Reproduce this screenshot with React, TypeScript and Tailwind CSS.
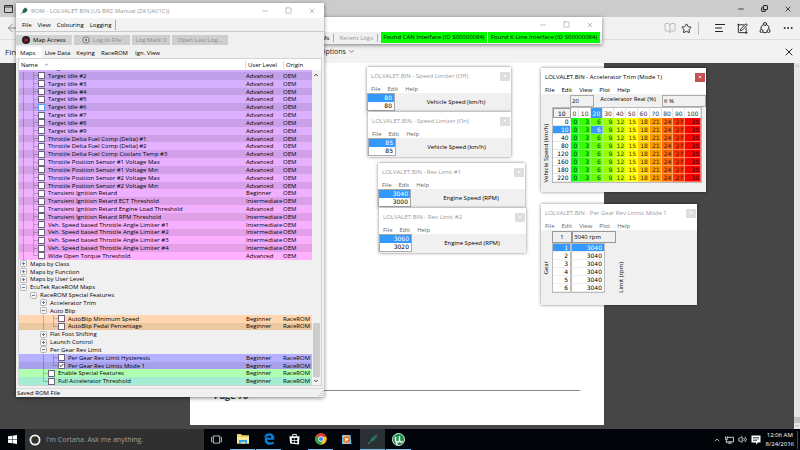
import type { ReactNode } from 'react'
import { AlignLeft, ArrowLeft, BookOpen, Check, ChevronDown, ChevronUp, Copy, Minus, MoreHorizontal, Square, Star, Volume2, X } from 'lucide-react'

type Guide = 'gap' | 'line' | 'branch' | 'end'

interface TreeRow {
  label: string
  guides: Guide[]
  node?: '+' | '-'
  level?: string
  origin?: string
  color?: string
  checked?: boolean
  focused?: boolean
}

const oemMaps: [string, string][] = [
  ['Target Idle #2', 'Advanced'],
  ['Target Idle #3', 'Advanced'],
  ['Target Idle #4', 'Advanced'],
  ['Target Idle #5', 'Advanced'],
  ['Target Idle #6', 'Advanced'],
  ['Target Idle #7', 'Advanced'],
  ['Target Idle #8', 'Advanced'],
  ['Target Idle #9', 'Advanced'],
  ['Throttle Delta Fuel Comp (Delta) #1', 'Advanced'],
  ['Throttle Delta Fuel Comp (Delta) #2', 'Advanced'],
  ['Throttle Delta Fuel Comp Coolant Temp #3', 'Advanced'],
  ['Throttle Position Sensor #1 Voltage Max', 'Advanced'],
  ['Throttle Position Sensor #1 Voltage Min', 'Advanced'],
  ['Throttle Position Sensor #2 Voltage Max', 'Advanced'],
  ['Throttle Position Sensor #2 Voltage Min', 'Advanced'],
  ['Transient Ignition Retard', 'Beginner'],
  ['Transient Ignition Retard ECT Threshold', 'Intermediate'],
  ['Transient Ignition Retard Engine Load Threshold', 'Advanced'],
  ['Transient Ignition Retard RPM Threshold', 'Intermediate'],
  ['Veh. Speed based Throttle Angle Limiter #1', 'Intermediate'],
  ['Veh. Speed based Throttle Angle Limiter #2', 'Intermediate'],
  ['Veh. Speed based Throttle Angle Limiter #3', 'Intermediate'],
  ['Veh. Speed based Throttle Angle Limiter #4', 'Intermediate'],
  ['Wide Open Torque Threshold', 'Advanced'],
]

// Lilac to pink down the list, every other row a shade darker
function oemColor(i: number) {
  const shade = i % 2 === 0 ? 0.91 : 1
  const red = 210 + (i / 23) * 45
  return `rgb(${Math.round(red * shade)}, ${Math.round(176 * shade)}, ${Math.round(255 * shade)})`
}

const treeRows: TreeRow[] = [
  ...oemMaps.map(([label, level], i): TreeRow => ({
    label,
    level,
    origin: 'OEM',
    guides: ['line', i === oemMaps.length - 1 ? 'end' : 'branch'],
    color: oemColor(i),
    focused: i === 4,
  })),
  { label: 'Maps by Class', guides: [], node: '+' },
  { label: 'Maps by Function', guides: [], node: '+' },
  { label: 'Maps by User Level', guides: [], node: '+' },
  { label: 'EcuTek RaceROM Maps', guides: [], node: '-' },
  { label: 'RaceROM Special Features', guides: ['gap'], node: '-' },
  { label: 'Accelerator Trim', guides: ['gap', 'gap'], node: '+' },
  { label: 'Auto Blip', guides: ['gap', 'gap'], node: '-' },
  { label: 'AutoBlip Minimum Speed', guides: ['gap', 'gap', 'line', 'branch'], level: 'Beginner', origin: 'RaceROM', color: '#ffd6b0' },
  { label: 'AutoBlip Pedal Percentage', guides: ['gap', 'gap', 'line', 'end'], level: 'Beginner', origin: 'RaceROM', color: '#ebc8a2' },
  { label: 'Flat Foot Shifting', guides: ['gap', 'gap'], node: '+' },
  { label: 'Launch Control', guides: ['gap', 'gap'], node: '+' },
  { label: 'Per Gear Rev Limit', guides: ['gap', 'gap'], node: '-' },
  { label: 'Per Gear Rev Limit Hysteresis', guides: ['gap', 'gap', 'line', 'branch'], level: 'Beginner', origin: 'RaceROM', color: '#b5b0ff' },
  { label: 'Per Gear Rev Limits Mode 1', guides: ['gap', 'gap', 'line', 'end'], level: 'Beginner', origin: 'RaceROM', color: '#a8a0ea', checked: true },
  { label: 'Enable Special Features', guides: ['gap', 'gap', 'branch'], level: 'Beginner', origin: 'RaceROM', color: '#b0ffb0' },
  { label: 'Full Accelerator Threshold', guides: ['gap', 'gap', 'end'], level: 'Beginner', origin: 'RaceROM', color: '#a4ecd2' },
]

function GuideCell({ kind }: { kind: Guide }) {
  if (kind === 'gap') return <span className="w-[10px] shrink-0" />
  if (kind === 'line') return <span className="w-[10px] shrink-0 self-stretch border-l border-black/20" />
  return (
    <span className="flex w-[5px] shrink-0 flex-col self-stretch">
      <span className="flex-1 border-b border-l border-black/20" />
      <span className={kind === 'branch' ? 'flex-1 border-l border-black/20' : 'flex-1'} />
    </span>
  )
}

function TreeItem({ row }: { row: TreeRow }) {
  return (
    <tr className="flex min-h-0 flex-1 items-center" style={{ backgroundColor: row.color }}>
      <td className="flex flex-1 items-center self-stretch pl-1">
        {row.guides.map((kind, i) => <GuideCell key={i} kind={kind} />)}
        {row.node ? (
          <button className="-ml-[3px] flex items-center gap-[3px]">
            <svg viewBox="0 0 7 7" className="h-[7px] w-[7px]" fill="none">
              <rect x="0.5" y="0.5" width="6" height="6" rx="1" fill="#f4f4f4" stroke="#b4b4b4" />
              <path d={row.node === '+' ? 'M2 3.5h3M3.5 2v3' : 'M2 3.5h3'} stroke="#6a78aa" />
            </svg>
            {row.label}
          </button>
        ) : (
          <label className="flex items-center gap-[3px]">
            <span className="relative flex">
              <input
                type="checkbox"
                defaultChecked={row.checked}
                className={`peer h-[7px] w-[7px] appearance-none border bg-white ${row.focused ? 'border-[#5a9cf0]' : 'border-[#6d6480]'}`}
              />
              <Check className="pointer-events-none absolute inset-px hidden h-[5px] w-[5px] text-black peer-checked:block" strokeWidth={4} />
            </span>
            {row.label}
          </label>
        )}
      </td>
      <td className="w-[37px]">{row.level}</td>
      <td className="w-[29px]">{row.origin}</td>
    </tr>
  )
}

function CarIcon({ className }: { className: string }) {
  return (
    <svg viewBox="0 0 16 16" className={className}>
      <path d="M1 15 5 9.500C5 5.500 9 2 12 1l1 2.500 2 .5c0 4-3.500 7.500-7.500 8L4 11.500 2 15.500z" fill="#17594a" />
      <path d="M5 11 12 4" stroke="#4fa08a" strokeWidth="1" />
    </svg>
  )
}

function MenuBar({ items, className }: { items: string[]; className: string }) {
  return (
    <nav className={`flex items-center ${className}`}>
      {items.map((item) => <button key={item}>{item}</button>)}
    </nav>
  )
}

function RomWindow() {
  return (
    <section className="absolute top-[3px] left-4 flex h-[394px] w-[308px] flex-col bg-[#f0f0f0] shadow-[0_1px_4px_rgba(0,0,0,0.5)]">
      <header className="flex h-[15px] items-center bg-white pl-1 text-[#999]">
        <CarIcon className="h-2 w-2" />
        <h1 className="ml-[3px] flex-1">ROM - LOLVALET.BIN (US BRZ Manual (ZA1JA01C))</h1>
        <div className="flex gap-4 pr-2">
          <button aria-label="Minimize"><Minus className="h-2 w-2" strokeWidth={2} /></button>
          <button aria-label="Maximize"><Square className="h-[7px] w-[7px]" strokeWidth={2} /></button>
          <button aria-label="Close"><X className="h-2 w-2" strokeWidth={2} /></button>
        </div>
      </header>
      <div className="flex h-[13px] items-center bg-[#f2f2f2] pl-[6px]">
        <MenuBar items={['File', 'View', 'Colouring', 'Logging']} className="h-[10px] gap-[6px] border-r border-[#aaa] pr-1" />
      </div>
      <div className="h-px bg-[#c8c8c8]" />
      <div className="mt-[3px] flex h-[10px] gap-[2px] text-[#8d8d8d]">
        <button className="flex w-[56px] items-center gap-[3px] bg-[#d2d2d2] pl-[6px] text-black">
          <svg viewBox="0 0 8 8" className="h-2 w-2 shrink-0"><circle cx="4" cy="4" r="4" fill="#222" /><circle cx="4" cy="4" r="1.500" fill="#d01818" /></svg>
          Map Access
        </button>
        <button className="flex w-[56px] items-center gap-[3px] bg-[#cecece] pl-2">
          <svg viewBox="0 0 8 8" className="h-2 w-2 shrink-0"><circle cx="4" cy="4" r="3" fill="#ddd" stroke="#999" strokeWidth="1.500" /><circle cx="4" cy="4" r="1.200" fill="#777" /></svg>
          Log to File
        </button>
        <button className="w-[38px] bg-[#cecece]">Log Mark 0</button>
        <button className="w-[56px] bg-[#cecece]">Open Last Log...</button>
      </div>
      <div role="tablist" className="mt-[2px] flex h-[11px] items-center">
        <button role="tab" aria-selected="true" className="h-[11px] w-[26px] bg-white pl-1 text-left">Maps</button>
        <button role="tab" className="w-[31px]">Live Data</button>
        <button role="tab" className="w-[25px]">Keying</button>
        <button role="tab" className="w-[33px]">RaceROM</button>
        <button role="tab" className="w-[33px]">Ign. View</button>
      </div>
      <div className="mx-[2px] mb-[2px] flex min-h-0 flex-1 flex-col border border-[#d4d4d4]">
        <table className="flex min-h-0 flex-1 flex-col text-left">
          <thead className="bg-white">
            <tr className="flex h-[11px] items-center">
              <th className="flex flex-1 items-center gap-[6px] pl-[2px] font-normal">Name <ChevronUp className="h-[5px] w-[5px]" /></th>
              <th className="w-[38px] border-l border-[#ddd] pl-[2px] font-normal">User Level</th>
              <th className="w-[38px] border-l border-[#ddd] pl-[2px] font-normal">Origin</th>
            </tr>
          </thead>
          <tbody className="mr-[9px] flex min-h-0 flex-1 flex-col">
            <tr className="flex h-[2px] items-end overflow-hidden bg-[#d2b0ff]">
              <td className="flex-1 pl-[29px]">Target Idle #1</td>
              <td className="w-[37px]">Advanced</td>
              <td className="w-[29px]">OEM</td>
            </tr>
            {treeRows.map((row) => <TreeItem key={row.label} row={row} />)}
          </tbody>
        </table>
      </div>
      <div className="absolute top-[67px] right-1 bottom-3 flex w-2 flex-col items-center justify-between">
        <ChevronUp className="mt-[2px] h-[6px] w-[6px]" strokeWidth={3} />
        <span className="mt-auto h-[54px] w-[7px] bg-[#cdcdcd]" />
        <ChevronDown className="my-px h-[6px] w-[6px]" strokeWidth={3} />
      </div>
      <footer className="flex h-[9px] items-center justify-between border-t border-[#ddd] pl-px">
        Saved ROM File
        <svg viewBox="0 0 6 6" className="h-[6px] w-[6px]"><path d="M5 1v1M5 3v1M3 3v1M5 5v1M3 5v1M1 5v1" stroke="#aaa" /></svg>
      </footer>
    </section>
  )
}

interface MapWindowProps {
  title: string
  place: string
  menu: string[]
  active?: boolean
  children: ReactNode
}

function MapWindow({ title, place, menu, active, children }: MapWindowProps) {
  return (
    <section className={`absolute flex flex-col bg-white shadow-[0_0_3px_rgba(0,0,0,0.5)] ${place} ${active ? 'text-black' : 'text-[#8a8a8a]'}`}>
      <header className="flex h-[17px] items-center pl-1">
        <h2 className={`flex-1 ${active ? '' : 'text-[#9a9a9a]'}`}>{title}</h2>
        <button
          aria-label="Close"
          className={`mt-px mr-px flex h-[9px] w-[10px] items-center justify-center ${active ? 'bg-[#c75050] text-white' : 'bg-[#dedede] text-white'}`}
        >
          <X className="h-1 w-1" strokeWidth={4} />
        </button>
      </header>
      <MenuBar items={menu} className={`h-[9px] pl-1 ${active ? '' : 'text-[#666]'} gap-[7px]`} />
      <div className="flex-1 bg-[#f0f0f0] text-black">{children}</div>
    </section>
  )
}

interface LimiterProps {
  title: string
  place: string
  values: number[]
  unit: string
  wide?: boolean
}

function Limiter({ title, place, values, unit, wide }: LimiterProps) {
  return (
    <MapWindow title={title} place={place} menu={['File', 'Edit', 'Help']}>
      <div className="flex items-center">
        <table className={`border border-[#aaa] bg-white text-right font-['DejaVu_Sans',sans-serif] ${wide ? 'w-[33px]' : 'w-7'}`}>
          <tbody>
            {values.map((value, i) => (
              <tr key={value + '-' + i} className={i === 0 ? 'h-2 bg-[#3399ff] text-white' : 'h-2'}>
                <td className="pr-[2px]">{value}</td>
              </tr>
            ))}
          </tbody>
        </table>
        <p className="flex-1 pl-[6px] text-center">{unit}</p>
      </div>
    </MapWindow>
  )
}

const pedal = [0, 10, 20, 30, 40, 50, 60, 70, 80, 90, 100]
const speeds = [0, 10, 40, 80, 120, 160, 180, 220]
const trimColors = ['#00ff00', '#33ff00', '#66ff00', '#99ff00', '#ccff00', '#ffff00', '#ffcc00', '#ff9900', '#ff6600', '#ff3300', '#ff0000']

function AcceleratorTrim() {
  return (
    <MapWindow active title="LOLVALET.BIN - Accelerator Trim (Mode 1)" place="left-[541px] top-[68px] w-[165px] h-[124px]" menu={['File', 'Edit', 'View', 'Plot', 'Help']}>
      <div className="flex h-[13px] pt-px pl-[29px]">
        <output className="w-6 border border-[#aaa] pl-px leading-[10px]">20</output>
        <span className="flex-1 text-center">Accelerator Real (%)</span>
        <output className="w-[44px] border border-[#aaa] pl-px leading-[10px]">6 %</output>
      </div>
      <div className="flex items-center pr-1">
        <span className="w-[11px] rotate-180 self-end text-center leading-[11px] [writing-mode:vertical-rl]">Vehicle Speed (km/h)</span>
        <table className="flex-1 table-fixed border-separate border-spacing-0 border border-[#bbb] bg-white text-right font-['DejaVu_Sans',sans-serif] leading-[7px]">
          <colgroup>
            <col className="w-[18px]" />
            <col className="w-[9px]" />
            {pedal.slice(2).map((p) => <col key={p} className="w-3" />)}
            <col className="w-4" />
          </colgroup>
          <thead>
            <tr className="h-[10px]">
              <th className="border border-[#999] bg-[#f0f0f0] text-center font-normal">10</th>
              {pedal.map((p) => (
                <th key={p} className={`border-r border-[#e4e4e4] text-center font-normal ${p === 20 ? 'bg-[#3399ff] text-white' : 'text-[#333]'}`}>{p}</th>
              ))}
            </tr>
          </thead>
          <tbody>
            {speeds.map((speed) => (
              <tr key={speed} className="h-2">
                <th className={`border-r border-b border-[#e4e4e4] pr-px text-right font-normal ${speed === 10 ? 'bg-[#3399ff] text-white' : ''}`}>{speed}</th>
                {pedal.map((p, i) => {
                  const selected = speed === 10 && p === 20
                  return (
                    <td
                      key={p}
                      className={`border-r border-b border-white/40 pr-px ${selected ? 'text-white' : 'text-black/80'}`}
                      style={{ backgroundColor: selected ? '#3399ff' : trimColors[i] }}
                    >
                      {i * 3}
                    </td>
                  )
                })}
              </tr>
            ))}
          </tbody>
        </table>
      </div>
    </MapWindow>
  )
}

function PerGear() {
  return (
    <MapWindow title="LOLVALET.BIN - Per Gear Rev Limits Mode 1" place="left-[541px] top-[204px] w-[156px] h-[101px]" menu={['File', 'Edit', 'View', 'Plot', 'Help']}>
      <div className="flex pt-px pl-[11px]">
        <output className="w-[20px] border border-[#999] text-center leading-[10px]">1</output>
        <output className="w-[44px] border border-[#999] pl-px leading-[10px]">3040 rpm</output>
      </div>
      <div className="flex items-center">
        <span className="w-[11px] rotate-180 text-center leading-[11px] [writing-mode:vertical-rl]">Gear</span>
        <table className="border-separate border-spacing-0 border border-[#bbb] bg-white text-right font-['DejaVu_Sans',sans-serif] leading-[7px]">
          <tbody>
            {[1, 2, 3, 4, 5, 6].map((gear) => (
              <tr key={gear} className={gear === 1 ? 'h-2 bg-[#3399ff] text-white' : 'h-2'}>
                <th className="w-[19px] border-r-2 border-b border-r-[#bbb] border-b-[#eee] pr-[2px] text-right font-normal">{gear}</th>
                <td className="w-8 border-b border-[#eee] pr-[2px]">3040</td>
              </tr>
            ))}
          </tbody>
        </table>
        <span className="ml-[11px] w-[11px] rotate-180 self-end text-center leading-[11px] [writing-mode:vertical-rl]">Limit (rpm)</span>
      </div>
    </MapWindow>
  )
}

function LoggerWindow() {
  return (
    <section className="absolute top-[17px] left-[200px] w-[402px] bg-[#f0f0f0] shadow-[0_1px_4px_rgba(0,0,0,0.5)]">
      <header className="flex h-[15px] items-center justify-end gap-4 bg-white pr-2 text-[#999]">
        <button aria-label="Minimize"><Minus className="h-2 w-2" strokeWidth={2} /></button>
        <button aria-label="Maximize"><Square className="h-[7px] w-[7px]" strokeWidth={2} /></button>
        <button aria-label="Close"><X className="h-2 w-2" strokeWidth={2} /></button>
      </header>
      <div className="flex h-3 items-center justify-end gap-px pr-[2px] pb-px">
        <button className="border-r border-[#aaa] pr-1">VIMs</button>
        <button className="mr-[2px] border-r border-[#aaa] px-1 text-[#999]">Recent Logs</button>
        <span className="w-[106px] bg-[#00ff00] text-center leading-[11px]">Found CAN Interface (ID S00000084)</span>
        <span className="w-[112px] bg-[#00ff00] text-center leading-[11px]">Found K-Line Interface (ID S00000084)</span>
      </div>
    </section>
  )
}

function Browser() {
  return (
    <main className="flex flex-1 flex-col">
      <div className="flex h-[17px] items-center justify-between bg-[#cccccc] px-1 text-black">
        <svg viewBox="0 0 9 8" className="h-2 w-[9px]" fill="none" stroke="#333"><path d="M.5.5h8v7h-8zM.5 2h8" /></svg>
        <div className="flex items-center gap-4 pr-1">
          <button aria-label="Minimize"><Minus className="h-2 w-2" /></button>
          <button aria-label="Restore"><Copy className="h-[7px] w-[7px] -scale-y-100" strokeWidth={3} /></button>
          <button aria-label="Close"><X className="h-2 w-2" /></button>
        </div>
      </div>
      <div className="flex h-[22px] items-center justify-between bg-[#f2f2f2] px-[6px] text-[#222]">
        <button aria-label="Back"><ArrowLeft className="h-3 w-3 text-[#888]" strokeWidth={2} /></button>
        <div className="flex items-center gap-[11px]">
          <div className="flex h-[13px] items-center gap-[5px] border-r border-[#bbb] pr-[6px]">
            <BookOpen className="h-3 w-3 text-[#bbb]" strokeWidth={2} />
            <Star className="h-[11px] w-[11px]" strokeWidth={2} />
          </div>
          <AlignLeft className="ml-1 h-3 w-3" strokeWidth={2} />
          <svg viewBox="0 0 12 12" className="h-[11px] w-[11px]" fill="none" stroke="currentColor" strokeWidth="1">
            <path d="M8 2H1.500v8.500H10V5M3.500 8.500 4.200 6.300 10 .8l1.300 1.300-5.600 5.700zM.5 2h2M1.500.8V2M10 10.500h1.500M10 10.500V12" />
          </svg>
          <svg viewBox="0 0 12 12" className="h-3 w-3" fill="none" stroke="currentColor" strokeWidth="1">
            <path d="M4.300 2.600A4 4 0 0 0 2 7M7.700 2.600A4 4 0 0 1 10 7M4.200 10.300a4 4 0 0 0 3.600 0" />
            <circle cx="6" cy="2" r="1.500" /><circle cx="2.500" cy="9" r="1.500" /><circle cx="9.500" cy="9" r="1.500" />
          </svg>
          <MoreHorizontal className="h-3 w-3" strokeWidth={2} />
        </div>
      </div>
      <div className="flex h-6 items-center border-t border-[#ddd] bg-[#f2f2f2] px-[5px] text-[8px] text-[#222]">
        <span className="w-[315px]">Find</span>
        <button className="flex items-center gap-[2px] text-[7px]">Options <ChevronDown className="h-[7px] w-[7px]" /></button>
        <button aria-label="Close find bar" className="ml-auto"><X className="h-3 w-3" strokeWidth={2} /></button>
      </div>
      <div className="flex flex-1 bg-[#464646]">
        <div className="flex flex-1 justify-center pb-1">
          <article className="flex w-[414px] flex-col justify-end bg-white px-6 pb-6">
            <p className="border-t border-[#888] text-[9px] leading-[10px] font-bold text-[#333]">Page 70</p>
          </article>
        </div>
        <div className="flex w-[6px] flex-col items-center bg-[#e6e6e6] text-[#888]">
          <ChevronUp className="h-[6px] w-[6px]" />
          <span className="mt-auto h-[6px] w-full bg-[#c2c2c2]" />
          <ChevronDown className="h-[6px] w-[6px]" />
        </div>
      </div>
    </main>
  )
}

function TaskButton({ label, open, current, children }: { label: string; open?: boolean; current?: boolean; children: ReactNode }) {
  return (
    <button aria-label={label} className={`flex w-[25px] items-center justify-center border-b ${open ? 'border-[#76b9ed]' : 'border-transparent'} ${current ? 'bg-[#2b3034]' : ''}`}>
      {children}
    </button>
  )
}

function Taskbar() {
  return (
    <footer className="flex h-[21px] items-stretch bg-[#010409] text-white">
      <button aria-label="Start" className="flex w-[25px] items-center justify-center">
        <svg viewBox="0 0 10 10" className="h-[9px] w-[9px]" fill="#fff"><path d="M0 1.400 4.600.8v3.900H0zM5.100.7 10 0v4.700H5.100zM0 5.200h4.600v3.900L0 8.500zM5.100 5.200H10V10l-4.900-.7z" /></svg>
      </button>
      <label className="flex w-[179px] items-center gap-[5px] bg-[#303030] pl-1">
        <svg viewBox="0 0 12 12" className="h-3 w-3" fill="none" stroke="#f4f4f4" strokeWidth="1.800"><circle cx="6" cy="6" r="4.600" /></svg>
        <input type="text" aria-label="Search" placeholder="I'm Cortana. Ask me anything." className="min-w-0 flex-1 bg-transparent text-[7px] placeholder:text-[#a0a0a0]" />
      </label>
      <div className="flex gap-px">
        <TaskButton label="Task View">
          <svg viewBox="0 0 12 10" className="h-[9px] w-[11px]" fill="none" stroke="#ccc"><path d="M2.500 1h7v8h-7zM1.500 2.500h-1v5h1M10.500 2.500h1v5h-1" /></svg>
        </TaskButton>
        <TaskButton label="File Explorer" open>
          <svg viewBox="0 0 12 10" className="h-[10px] w-3"><path d="M0 0h4l1 1.200h7V9.500H0z" fill="#f0d060" /><path d="M0 3h12v6.500H0z" fill="#fbe89a" /><path d="M2 9.800V6h8v3.800H8V8H4v1.800z" fill="#35a6e8" /></svg>
        </TaskButton>
        <TaskButton label="Edge" open>
          <svg viewBox="0 0 24 24" className="h-3 w-3" fill="#0a80dd"><path d="M1.500 11C2.500 4 7.500.5 12.800.5 19 .5 22.500 5 22.500 10.800v2.700H8.300c.2 4 3.400 5.500 6.700 5.500 2.500 0 4.700-.7 6.500-1.900v4.600c-2 1.200-4.700 1.800-7.500 1.800-6.300 0-10.500-3.800-10.500-9.500 0-3.800 2-6.700 5.200-8.300C5.600 6.500 3 8 1.500 11zm6.900-1.500h8c0-3-1.300-4.500-3.700-4.500-2.200 0-3.900 1.600-4.300 4.500z" /></svg>
        </TaskButton>
        <TaskButton label="Store">
          <svg viewBox="0 0 12 13" className="h-3 w-[11px]"><path d="M4 4V1.500h4V4" fill="none" stroke="#fff" /><path d="M.5 3.500h11l-.7 9-9.600-1z" fill="#fff" /><path d="M3 5.800l2.500-.3v2.200H3zM6.100 5.400 9 5v2.700H6.100zM3 8.300h2.500v2.200L3 10.200zM6.100 8.300H9V11l-2.900-.4z" fill="#010409" /></svg>
        </TaskButton>
        <TaskButton label="Chrome" open>
          <svg viewBox="0 0 12 12" className="h-3 w-3">
            <circle cx="6" cy="6" r="5.800" fill="#fbc116" />
            <path d="M6 6 1 3.100A5.800 5.800 0 0 1 11 3.100L11.400 4H6z" fill="#e33b2e" />
            <path d="M6 6 1 3.100A5.800 5.800 0 0 0 5.500 11.800L7.800 7.800z" fill="#2ba24c" />
            <circle cx="6" cy="6" r="2.700" fill="#fff" /><circle cx="6" cy="6" r="2.100" fill="#4285f4" />
          </svg>
        </TaskButton>
        <TaskButton label="Media Player">
          <svg viewBox="0 0 12 12" className="h-[11px] w-[11px]"><path d="M1 1h9.500l1 10H1z" fill="#6bb0d8" /><path d="M2.500 1.500h6v9h-6z" fill="#c8d8e0" /><circle cx="6" cy="6" r="3.800" fill="#ee7d1d" /><path d="M4.800 3.800 8.300 6 4.800 8.200z" fill="#fff" /></svg>
        </TaskButton>
        <TaskButton label="EcuTek" open current>
          <svg viewBox="0 0 12 12" className="h-[11px] w-[11px]" fill="none">
            <path d="M1 11 4 8" stroke="#7fa69a" strokeWidth=".8" />
            <path d="M3 8.500C3 5.500 6 2.500 8.500 2l1.500 1.500C9.500 6 6.500 9 3.500 9z" fill="#1c6654" />
            <path d="M8.500 2.500 10.500.8M9.700 3.700 11.500 2M4.500 7.500l4-4" stroke="#5fa08e" strokeWidth=".7" />
          </svg>
        </TaskButton>
        <TaskButton label="uTorrent" open>
          <svg viewBox="0 0 14 14" className="h-[13px] w-[13px]"><circle cx="7" cy="7" r="6.500" fill="#1c8f4c" stroke="#e8f4ec" strokeWidth="1" /><path d="M3.800 4v3.500c0 3 4.200 3 4.200 0V3.500M8 7.500c.2 2.200 1.600 2.500 3.500 1.700M4.500 9.500 5.500 13" fill="none" stroke="#fff" strokeWidth="1.600" /></svg>
        </TaskButton>
      </div>
      <div className="ml-auto flex items-center gap-1 pr-[2px]">
        <ChevronUp className="h-2 w-2" strokeWidth={2} />
        <svg viewBox="0 0 10 8" className="h-2 w-[9px]" fill="none" stroke="#ddd"><path d="M2 1h7.500v5H2M5.500 6v1.500M3 7.500h4.500M.5 0v3.500h2V0M1.500 3.500v4" /></svg>
        <Volume2 className="h-[9px] w-[9px]" strokeWidth={2} />
        <svg viewBox="0 0 10 10" className="h-[10px] w-[10px]"><path d="M.5.5h9v7H7L5 9.500v-2H.5z" fill="#fff" /><path d="M2 2.500h6M2 4h6M2 5.500h4" stroke="#333" strokeWidth=".7" /></svg>
        <time className="ml-px border-r border-[#444] pr-[3px] text-center leading-[9px]">12:06 AM<br />8/24/2016</time>
      </div>
    </footer>
  )
}

export default function App() {
  return (
    <div className="relative flex min-h-screen flex-col overflow-hidden font-['Open_Sans',sans-serif] text-[6px] leading-[8px] whitespace-nowrap text-black">
      <Browser />
      <Taskbar />
      <LoggerWindow />
      <Limiter title="LOLVALET.BIN - Speed Limiter (Off)" place="left-[367px] top-[67px] w-[144px] h-[45px]" values={[80, 80]} unit="Vehicle Speed (km/h)" />
      <Limiter title="LOLVALET.BIN - Speed Limiter (On)" place="left-[368px] top-[112px] w-[143px] h-[45px]" values={[85, 85]} unit="Vehicle Speed (km/h)" />
      <Limiter wide title="LOLVALET.BIN - Rev Limit #1" place="left-[378px] top-[163px] w-[147px] h-[45px]" values={[3040, 3000]} unit="Engine Speed (RPM)" />
      <Limiter wide title="LOLVALET.BIN - Rev Limit #2" place="left-[379px] top-[208px] w-[147px] h-[45px]" values={[3060, 3020]} unit="Engine Speed (RPM)" />
      <AcceleratorTrim />
      <PerGear />
      <RomWindow />
    </div>
  )
}
